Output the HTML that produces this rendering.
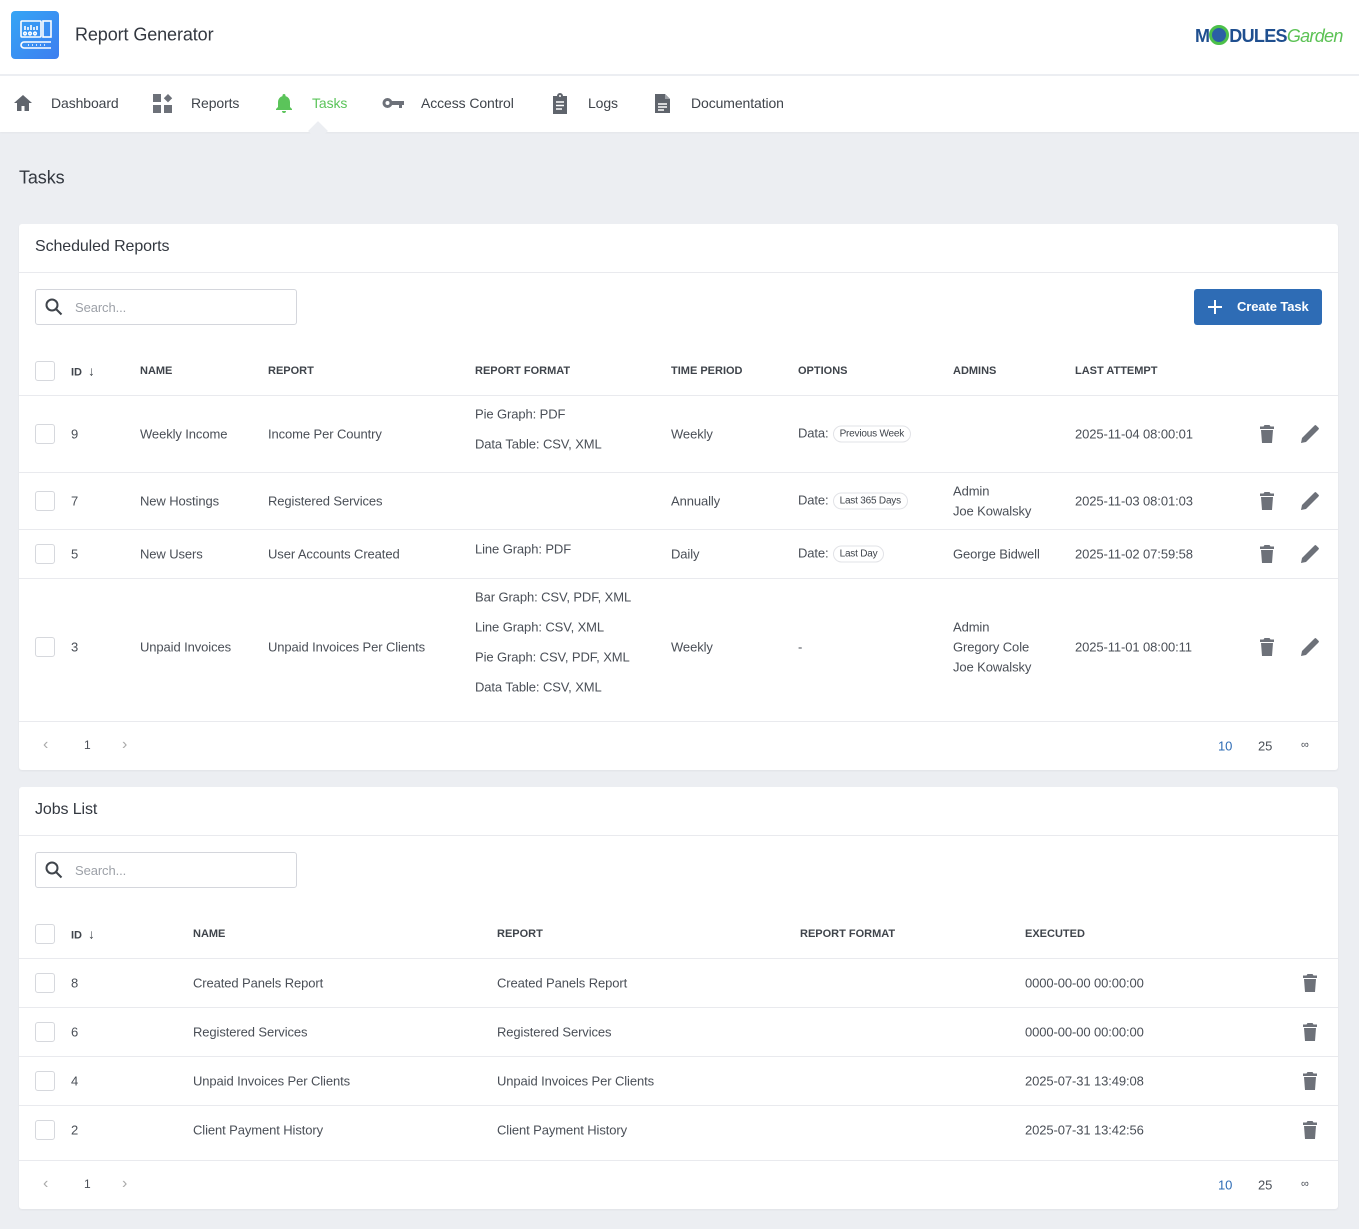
<!DOCTYPE html>
<html><head><meta charset="utf-8">
<style>
*{box-sizing:border-box;margin:0;padding:0}
body{width:1359px;height:1229px;background:#eceef2;font-family:"Liberation Sans",sans-serif;color:#4a4f57;font-size:13px;position:relative;overflow:hidden;letter-spacing:-0.1px}
.a{position:absolute}
.t{position:absolute;transform:translateY(-50%);white-space:nowrap}
.card{position:absolute;left:19px;width:1319px;background:#fff;border-radius:3px;box-shadow:0 1px 2px rgba(0,0,0,.05)}
.line{position:absolute;left:0;right:0;height:1px;background:#e9eaee}
.h{font-size:11px;font-weight:bold;color:#3f444b;letter-spacing:0}
.cb{position:absolute;width:20px;height:20px;border:1px solid #d6d8dd;border-radius:3px;background:#fff;transform:translateY(-50%)}
.search{position:absolute;left:16px;width:262px;height:36px;border:1px solid #d4d6dc;border-radius:3px}
.search span{position:absolute;left:39px;top:10px;color:#9da1a8;font-size:13px}
.badge{display:inline-block;border:1px solid #e2e3e7;border-radius:10px;font-size:10px;padding:2px 6px;color:#3f444b;margin-left:4px;vertical-align:1px;letter-spacing:-0.2px}
.nav{position:absolute;top:103px;transform:translateY(-50%);font-size:14px;color:#3f444b}
</style></head><body>
<div class="a" style="left:0;top:0;width:1359px;height:75px;background:#fff;border-bottom:1px solid #eceef2"></div>
<div class="a" style="left:11px;top:11px;width:48px;height:48px;border-radius:4px;background:linear-gradient(135deg,#35a5f5,#3d7ef0)">
<svg width="48" height="48" viewBox="0 0 48 48" fill="none" stroke="#fff" stroke-width="1.6"><rect x="10" y="10" width="20" height="16" rx="1"/><rect x="32" y="10" width="8" height="16"/><path d="M14 19v-4M17 19v-3M20 19v-5M23 19v-3M26 19v-4"/><circle cx="14" cy="22.5" r="1.3"/><circle cx="19" cy="22.5" r="1.3"/><circle cx="24" cy="22.5" r="1.3"/><path d="M13 31h27M13 37h27M13 31a3 3 0 0 0 0 6"/><path d="M17 34h1M21 34h1M25 34h1M29 34h1M33 34h1" stroke-dasharray="1 2"/></svg></div>
<div class="t" style="left:75px;top:35px;font-size:18px;color:#333840">Report Generator</div>
<div class="t" style="left:1195px;top:36px;font-size:18px;font-weight:bold;color:#1f4f8f;letter-spacing:-0.7px">M<span style="display:inline-block;width:20px;height:20px;border:3px solid #4cc04a;border-radius:50%;vertical-align:-3px;background:#2b5fa5"></span>DULES<span style="font-weight:normal;color:#5cc255;font-style:italic">Garden</span></div>
<div class="a" style="left:0;top:76px;width:1359px;height:56px;background:#fff;box-shadow:0 1px 2px rgba(0,0,0,.04)"></div>
<div class="a" style="left:311px;top:124px;width:14px;height:14px;background:#eceef2;transform:rotate(45deg)"></div>
<svg class="a" style="left:13px;top:94px" width="20" height="18" viewBox="0 0 20 18"><path d="M10 1L1 9h3v8h4.5v-5h3v5H16V9h3z" fill="#5f646c"/></svg>
<div class="nav" style="left:51px">Dashboard</div>
<svg class="a" style="left:153px;top:94px" width="20" height="20" viewBox="0 0 20 20" fill="#6d7179"><rect x="0" y="0" width="8" height="8"/><rect x="0" y="11" width="8" height="8"/><rect x="11" y="11" width="8" height="8"/><path d="M15 0l4.2 4.2L15 8.4 10.8 4.2z"/></svg>
<div class="nav" style="left:191px">Reports</div>
<svg class="a" style="left:275px;top:93px" width="18" height="21" viewBox="0 0 18 21"><path d="M9 1a1.5 1.5 0 0 1 1.5 1.5v.6A6 6 0 0 1 15 9v5l2 2v1H1v-1l2-2V9a6 6 0 0 1 4.5-5.9v-.6A1.5 1.5 0 0 1 9 1zM7 18h4a2 2 0 0 1-4 0z" fill="#5bc45a"/></svg>
<div class="nav" style="left:312px;color:#5bc45a">Tasks</div>
<svg class="a" style="left:382px;top:97px" width="22" height="12" viewBox="0 0 22 12"><circle cx="5.5" cy="6" r="5" fill="#6d7179"/><circle cx="5.5" cy="6" r="2" fill="#fff"/><path d="M10 4h12v4h-2v3h-3V8h-7z" fill="#6d7179"/></svg>
<div class="nav" style="left:421px">Access Control</div>
<svg class="a" style="left:551px;top:93px" width="18" height="21" viewBox="0 0 18 21"><path d="M2 3h4a3 3 0 0 1 6 0h4v18H2z" fill="#5f646c"/><path d="M5 9h8M5 12.5h8M5 16h6" stroke="#fff" stroke-width="1.6"/><circle cx="9" cy="3" r="1" fill="#fff"/></svg>
<div class="nav" style="left:588px">Logs</div>
<svg class="a" style="left:654px;top:93px" width="17" height="21" viewBox="0 0 17 21"><path d="M1 1h10l5 5v14H1z" fill="#5f646c"/><path d="M11 1v5h5" fill="#9ea2a8"/><path d="M4 11h9M4 14h9M4 17h6" stroke="#fff" stroke-width="1.5"/></svg>
<div class="nav" style="left:691px">Documentation</div>

<div class="t" style="left:19px;top:178px;font-size:18px;color:#333840">Tasks</div>

<div class="card" style="top:224px;height:546px">
<div class="t" style="left:16px;top:23px;font-size:16px;color:#333840">Scheduled Reports</div>
<div class="line" style="top:48px"></div>
<div class="search" style="top:65px"><svg class="a" style="left:9px;top:8px" width="18" height="18" viewBox="0 0 18 18" fill="none" stroke="#3f444b" stroke-width="2"><circle cx="7" cy="7" r="5.5"/><path d="M11 11l5.5 5.5"/></svg><span>Search...</span></div>
<div class="a" style="left:1175px;top:65px;width:128px;height:36px;background:#2e6cb5;border-radius:3px;color:#fff;font-size:13px;font-weight:bold"><svg class="a" style="left:14px;top:11px" width="14" height="14" viewBox="0 0 14 14" stroke="#fff" stroke-width="2"><path d="M7 0v14M0 7h14"/></svg><span class="a" style="left:43px;top:10px">Create Task</span></div>
<div class="cb" style="left:16px;top:147px"></div>
<div class="t h" style="left:52px;top:147px">ID &nbsp;<span style="font-weight:normal;font-size:13px">↓</span></div>
<div class="t h" style="left:121px;top:147px">NAME</div>
<div class="t h" style="left:249px;top:147px">REPORT</div>
<div class="t h" style="left:456px;top:147px">REPORT FORMAT</div>
<div class="t h" style="left:652px;top:147px">TIME PERIOD</div>
<div class="t h" style="left:779px;top:147px">OPTIONS</div>
<div class="t h" style="left:934px;top:147px">ADMINS</div>
<div class="t h" style="left:1056px;top:147px">LAST ATTEMPT</div>
<div class="line" style="top:171px"></div>
<div class="cb" style="left:16px;top:210px"></div>
<div class="t" style="left:52px;top:210px">9</div>
<div class="t" style="left:121px;top:210px">Weekly Income</div>
<div class="t" style="left:249px;top:210px">Income Per Country</div>
<div class="t" style="left:456px;top:190px">Pie Graph: PDF</div>
<div class="t" style="left:456px;top:220px">Data Table: CSV, XML</div>
<div class="t" style="left:652px;top:210px">Weekly</div>
<div class="t" style="left:779px;top:210px">Data:<span class="badge">Previous Week</span></div>
<div class="t" style="left:1056px;top:210px">2025-11-04 08:00:01</div>
<div class="line" style="top:248px"></div>
<div class="cb" style="left:16px;top:277px"></div>
<div class="t" style="left:52px;top:277px">7</div>
<div class="t" style="left:121px;top:277px">New Hostings</div>
<div class="t" style="left:249px;top:277px">Registered Services</div>
<div class="t" style="left:652px;top:277px">Annually</div>
<div class="t" style="left:779px;top:277px">Date:<span class="badge">Last 365 Days</span></div>
<div class="t" style="left:934px;top:267px">Admin</div>
<div class="t" style="left:934px;top:287px">Joe Kowalsky</div>
<div class="t" style="left:1056px;top:277px">2025-11-03 08:01:03</div>
<div class="line" style="top:305px"></div>
<div class="cb" style="left:16px;top:330px"></div>
<div class="t" style="left:52px;top:330px">5</div>
<div class="t" style="left:121px;top:330px">New Users</div>
<div class="t" style="left:249px;top:330px">User Accounts Created</div>
<div class="t" style="left:456px;top:325px">Line Graph: PDF</div>
<div class="t" style="left:652px;top:330px">Daily</div>
<div class="t" style="left:779px;top:330px">Date:<span class="badge">Last Day</span></div>
<div class="t" style="left:934px;top:330px">George Bidwell</div>
<div class="t" style="left:1056px;top:330px">2025-11-02 07:59:58</div>
<div class="line" style="top:354px"></div>
<div class="cb" style="left:16px;top:423px"></div>
<div class="t" style="left:52px;top:423px">3</div>
<div class="t" style="left:121px;top:423px">Unpaid Invoices</div>
<div class="t" style="left:249px;top:423px">Unpaid Invoices Per Clients</div>
<div class="t" style="left:456px;top:373px">Bar Graph: CSV, PDF, XML</div>
<div class="t" style="left:456px;top:403px">Line Graph: CSV, XML</div>
<div class="t" style="left:456px;top:433px">Pie Graph: CSV, PDF, XML</div>
<div class="t" style="left:456px;top:463px">Data Table: CSV, XML</div>
<div class="t" style="left:652px;top:423px">Weekly</div>
<div class="t" style="left:779px;top:423px">-</div>
<div class="t" style="left:934px;top:403px">Admin</div>
<div class="t" style="left:934px;top:423px">Gregory Cole</div>
<div class="t" style="left:934px;top:443px">Joe Kowalsky</div>
<div class="t" style="left:1056px;top:423px">2025-11-01 08:00:11</div>
<div class="line" style="top:497px"></div>
<div class="t" style="left:24px;top:521px;color:#aaa;font-size:16px">‹</div>
<div class="t" style="left:65px;top:521px;font-size:12px">1</div>
<div class="t" style="left:103px;top:521px;color:#aaa;font-size:16px">›</div>
<div class="t" style="left:1199px;top:522px;color:#2e6cb5;font-size:13px">10</div>
<div class="t" style="left:1239px;top:522px;font-size:13px">25</div>
<div class="t" style="left:1282px;top:521px;font-size:11px">∞</div>
</div>

<div class="card" style="top:787px;height:422px">
<div class="t" style="left:16px;top:23px;font-size:16px;color:#333840">Jobs List</div>
<div class="line" style="top:48px"></div>
<div class="search" style="top:65px"><svg class="a" style="left:9px;top:8px" width="18" height="18" viewBox="0 0 18 18" fill="none" stroke="#3f444b" stroke-width="2"><circle cx="7" cy="7" r="5.5"/><path d="M11 11l5.5 5.5"/></svg><span>Search...</span></div>
<div class="cb" style="left:16px;top:147px"></div>
<div class="t h" style="left:52px;top:147px">ID &nbsp;<span style="font-weight:normal;font-size:13px">↓</span></div>
<div class="t h" style="left:174px;top:147px">NAME</div>
<div class="t h" style="left:478px;top:147px">REPORT</div>
<div class="t h" style="left:781px;top:147px">REPORT FORMAT</div>
<div class="t h" style="left:1006px;top:147px">EXECUTED</div>
<div class="line" style="top:171px"></div>
<div class="cb" style="left:16px;top:196px"></div>
<div class="t" style="left:52px;top:196px">8</div><div class="t" style="left:174px;top:196px">Created Panels Report</div><div class="t" style="left:478px;top:196px">Created Panels Report</div><div class="t" style="left:1006px;top:196px">0000-00-00 00:00:00</div>
<div class="line" style="top:220px"></div>
<div class="cb" style="left:16px;top:245px"></div>
<div class="t" style="left:52px;top:245px">6</div><div class="t" style="left:174px;top:245px">Registered Services</div><div class="t" style="left:478px;top:245px">Registered Services</div><div class="t" style="left:1006px;top:245px">0000-00-00 00:00:00</div>
<div class="line" style="top:269px"></div>
<div class="cb" style="left:16px;top:294px"></div>
<div class="t" style="left:52px;top:294px">4</div><div class="t" style="left:174px;top:294px">Unpaid Invoices Per Clients</div><div class="t" style="left:478px;top:294px">Unpaid Invoices Per Clients</div><div class="t" style="left:1006px;top:294px">2025-07-31 13:49:08</div>
<div class="line" style="top:318px"></div>
<div class="cb" style="left:16px;top:343px"></div>
<div class="t" style="left:52px;top:343px">2</div><div class="t" style="left:174px;top:343px">Client Payment History</div><div class="t" style="left:478px;top:343px">Client Payment History</div><div class="t" style="left:1006px;top:343px">2025-07-31 13:42:56</div>
<div class="line" style="top:373px"></div>
<div class="t" style="left:24px;top:397px;color:#aaa;font-size:16px">‹</div>
<div class="t" style="left:65px;top:397px;font-size:12px">1</div>
<div class="t" style="left:103px;top:397px;color:#aaa;font-size:16px">›</div>
<div class="t" style="left:1199px;top:398px;color:#2e6cb5;font-size:13px">10</div>
<div class="t" style="left:1239px;top:398px;font-size:13px">25</div>
<div class="t" style="left:1282px;top:397px;font-size:11px">∞</div>
</div>

<svg width="0" height="0" style="position:absolute"><defs>
<symbol id="tr" viewBox="0 0 14 18"><path d="M4.5 0h5l1 1.5H14V4H0V1.5h3.5zM1 5h12l-1 13H2z" fill="#6d7179"/></symbol>
<symbol id="ed" viewBox="0 0 18 18"><path d="M0 18l1-5L12 2l4 4L5 17zM13.5 0.5l1.2-.5 3.3 3.3-.5 1.2-1.5 1.5-4-4z" fill="#6d7179"/></symbol>
</defs></svg>
<svg class="a" style="left:1260px;top:425px" width="14" height="18"><use href="#tr"/></svg>
<svg class="a" style="left:1301px;top:425px" width="18" height="18"><use href="#ed"/></svg>
<svg class="a" style="left:1260px;top:492px" width="14" height="18"><use href="#tr"/></svg>
<svg class="a" style="left:1301px;top:492px" width="18" height="18"><use href="#ed"/></svg>
<svg class="a" style="left:1260px;top:545px" width="14" height="18"><use href="#tr"/></svg>
<svg class="a" style="left:1301px;top:545px" width="18" height="18"><use href="#ed"/></svg>
<svg class="a" style="left:1260px;top:638px" width="14" height="18"><use href="#tr"/></svg>
<svg class="a" style="left:1301px;top:638px" width="18" height="18"><use href="#ed"/></svg>
<svg class="a" style="left:1303px;top:974px" width="14" height="18"><use href="#tr"/></svg>
<svg class="a" style="left:1303px;top:1023px" width="14" height="18"><use href="#tr"/></svg>
<svg class="a" style="left:1303px;top:1072px" width="14" height="18"><use href="#tr"/></svg>
<svg class="a" style="left:1303px;top:1121px" width="14" height="18"><use href="#tr"/></svg>
</body></html>
